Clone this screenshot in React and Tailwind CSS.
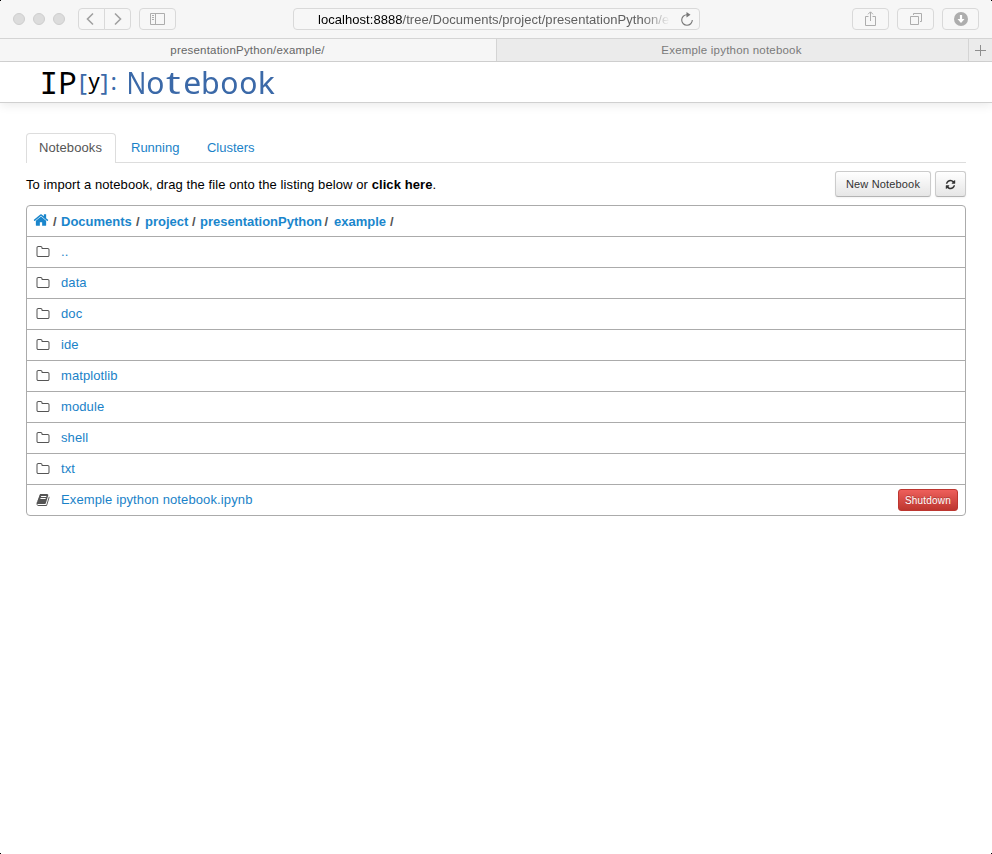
import React from "react";

const HOME =
  "M1472 992v480q0 26-19 45t-45 19h-384v-384h-256v384H384q-26 0-45-19t-19-45V992q0-1 .5-3t.5-3l575-474 575 474q1 2 1 6zm223-69l-62 74q-8 9-21 11h-3q-13 0-21-7L896 424l-692 577q-12 8-24 7-13-2-21-11l-62-74q-8-10-7-23.5t11-21.5l719-599q32-26 76-26t76 26l244 204V288q0-14 9-23t23-9h192q14 0 23 9t9 23v408l219 182q10 8 11 21.5t-7 23.5z";
const FOLDER =
  "M1600 1312V608q0-40-28-68t-68-28H800q-40 0-68-28t-28-68v-64q0-40-28-68t-68-28H288q-40 0-68 28t-28 68v960q0 40 28 68t68 28h1216q40 0 68-28t28-68zm128-704v704q0 92-66 158t-158 66H288q-92 0-158-66t-66-158V352q0-92 66-158t158-66h320q92 0 158 66t66 158v32h672q92 0 158 66t66 158z";
const REFRESH =
  "M1639 1056q0 5-1 7-64 268-268 434.5T892 1664q-146 0-282.5-55T366 1452l-129 129q-19 19-45 19t-45-19-19-45v-448q0-26 19-45t45-19h448q26 0 45 19t19 45-19 45l-137 137q71 66 161 102t187 36q134 0 250-65t186-179q11-17 53-117 8-23 30-23h192q13 0 22.5 9.5t9.5 22.5zm25-800v448q0 26-19 45t-45 19h-448q-26 0-45-19t-19-45 19-45l138-138Q1097 384 896 384q-134 0-250 65T460 628q-11 17-53 117-8 23-30 23H178q-13 0-22.5-9.5T146 736v-7q65-268 270-434.5T896 128q146 0 284 55.5T1425 340l130-129q19-19 45-19t45 19 19 45z";
const BOOK =
  "M1703 478q40 57 18 129l-275 906q-19 64-76.5 107.5T1247 1664H324q-77 0-148.5-53.5T76 1479q-24-67-2-127 0-4 3-27t4-37q1-8-3-21.5t-3-19.5q2-11 8-21t16.5-23.5T116 1179q23-38 45-91.5t30-91.5q3-10 .5-30t-.5-28q3-11 17-28t17-23q21-36 42-92t25-90q1-9-2.5-32t.5-28q4-13 22-30.5t22-22.5q19-26 42.5-84.5T404 411q1-8-3-25.5t-2-26.5q2-8 9-18t18-23 17-21q8-12 16.5-30.5t15-35 16-36 19.5-32 26.5-23.5 36-11.5T620 134l-1 3q38-9 51-9h761q74 0 114 56t18 130l-274 906q-36 119-71.5 153.5T1089 1408H220q-27 0-38 15-11 16-1 43 24 70 144 70h923q29 0 56-15.5t35-41.5l300-987q7-22 5-57 38 15 59 43zm-1064 2q-4 13 2 22.5t20 9.5h608q13 0 25.5-9.5T1311 480l21-64q4-13-2-22.5t-20-9.5H702q-13 0-25.5 9.5T660 416zm-83 256q-4 13 2 22.5t20 9.5h608q13 0 25.5-9.5T1228 736l21-64q4-13-2-22.5t-20-9.5H619q-13 0-25.5 9.5T577 672z";

function Glyph({ d, className }) {
  return (
    <svg viewBox="0 0 1792 1792" fill="currentColor" className={`shrink-0 ${className}`}>
      <path d={d} />
    </svg>
  );
}

function ToolButton({ className = "", children }) {
  return (
    <button className={`flex h-[22px] shrink-0 items-center justify-center rounded border border-[#d9d9d9] bg-[#f7f7f7] text-[#adadad] ${className}`}>
      {children}
    </button>
  );
}

function Toolbar() {
  return (
    <div className="flex h-[38px] items-center bg-[#f6f6f6]">
      <div className="ml-[13px] flex gap-2">
        {[0, 1, 2].map((i) => (
          <span key={i} className="size-3 rounded-full border border-[#cecece] bg-[#dcdcdc]" />
        ))}
      </div>
      <ToolButton className="ml-[13px] w-[27px] rounded-r-none pr-[3px]">
        <svg width="8" height="14" viewBox="0 0 8 14" fill="none" stroke="#a0a0a0" strokeWidth="1.6"><path d="M7 1.5 1.5 7 7 12.5" /></svg>
      </ToolButton>
      <ToolButton className="-ml-px w-[27px] rounded-l-none">
        <svg width="8" height="14" viewBox="0 0 8 14" fill="none" stroke="#a0a0a0" strokeWidth="1.6"><path d="M1 1.5 6.5 7 1 12.5" /></svg>
      </ToolButton>
      <ToolButton className="ml-2 w-[37px]">
        <svg width="15" height="12" viewBox="0 0 15 12" fill="none" stroke="#adadad"><path d="M.5 .5h14v11H.5zM5.5 1v10M2 2.5h2M2 4.5h2M2 6.5h2" /></svg>
      </ToolButton>
      <div className="ml-[117px] flex h-[22px] w-[407px] items-center rounded border border-[#d9d9d9] bg-[#f7f7f7] pl-6">
        <div className="w-[352px] pt-[2px] text-[13px] leading-[18px] tracking-[0.05px] whitespace-nowrap text-[#606060] [mask-image:linear-gradient(to_right,black_325px,transparent_352px)]">
          <span className="text-black">localhost:8888</span>/tree/Documents/project/presentationPython/e
        </div>
        <svg className="mb-px ml-[10px]" width="14" height="14" viewBox="0 0 14 14" fill="none" stroke="#777" strokeWidth="1.1">
          <path d="M7 2.7a5.3 5.3 0 1 0 5.3 5.3" />
          <path d="M6.5 0 10.5 2.7 6.5 5.4Z" fill="#777" stroke="none" />
        </svg>
      </div>
      <div className="ml-[152px] flex gap-2">
        <ToolButton className="w-[37px]">
          <svg className="mb-px" width="11" height="15" viewBox="0 0 11 15" fill="none" stroke="#adadad"><path d="M3.5 5.5h-3v9h10v-9h-3M5.5 10V1M3 3.3 5.5 .8 8 3.3" /></svg>
        </ToolButton>
        <ToolButton className="w-[37px]">
          <svg width="12" height="12" viewBox="0 0 12 12" fill="none" stroke="#adadad"><path d="M.5 3.5h8v8h-8zM3.5 2V.5h8v8H10" /></svg>
        </ToolButton>
        <ToolButton className="w-[37px]">
          <svg width="14" height="14" viewBox="0 0 14 14"><circle cx="7" cy="7" r="7" fill="#adadad" /><path d="M5.9 3h2.2v4h2.4L7 11 3.5 7h2.4z" fill="#fff" /></svg>
        </ToolButton>
      </div>
    </div>
  );
}

function TabStrip() {
  return (
    <div className="flex h-6 border-y border-[#d4d4d4] text-[11.5px] leading-[22px] tracking-[0.2px]">
      <div className="w-[496px] bg-[#f6f6f6] pr-px text-center text-[#666]">presentationPython/example/</div>
      <div className="w-[472px] border-l border-[#d4d4d4] bg-[#ebebeb] pr-[2px] text-center text-[#7a7a7a]">Exemple ipython notebook</div>
      <div className="flex w-6 items-center justify-center border-l border-[#d4d4d4] bg-[#ebebeb]">
        <svg width="11" height="11" viewBox="0 0 11 11" stroke="#8e8e8e"><path d="M5.5 0v11M0 5.5h11" /></svg>
      </div>
    </div>
  );
}

const WORDMARK = [
  ["N", "scale-x-[0.84]"],
  ["o", "scale-x-[0.97]"],
  ["t", "scale-x-[1.3]"],
  ["e", "scale-x-[1.03]"],
  ["b", "scale-x-[0.98]"],
  ["o", "scale-x-[0.97]"],
  ["o", "scale-x-[0.97]"],
  ["k", "scale-x-[1.03]"],
];

function Logo() {
  return (
    <div className="flex h-[41px] items-baseline border-b border-[#d0d0d0] pl-[39.5px] font-['Noto_Sans',sans-serif] text-[31px] leading-[41px] whitespace-pre text-[#3b69a8] shadow-[0_2px_10px_rgba(0,0,0,0.09)]">
      <span className="flex w-[18.5px] justify-center font-['DejaVu_Sans_Mono',monospace] text-[30px] text-black">I</span>
      <span className="flex w-[19px] justify-center text-black">P</span>
      <span className="w-[10.5px] -translate-y-[3.5px] pl-[2px] text-[24px]">[</span>
      <span className="w-[13px] -translate-y-[5px] pl-px text-[22px] text-black">y</span>
      <span className="w-[9px] -translate-y-[3.5px] text-[24px]">]</span>
      <span className="w-[17.5px] -translate-y-[4px] pl-px text-[24px]">:</span>
      <span className="flex">
        {WORDMARK.map(([letter, scale], i) => (
          <span key={i} className={`flex w-[18.6px] justify-center ${scale}`}>{letter}</span>
        ))}
      </span>
    </div>
  );
}

function Breadcrumb() {
  const crumbs = [
    ["Documents", "w-[75px]", "w-[9px]"],
    ["project", "w-[47px]", "w-[8px]"],
    ["presentationPython", "w-[124.5px]", "w-[9.5px]"],
    ["example", "w-[56px]", "w-[10px]"],
  ];
  return (
    <div className="flex h-[30px] items-center pt-px pl-[6px] font-bold text-[#555]">
      <Glyph d={HOME} className="mr-[4px] mb-[3px] size-4 text-[#1a86cc]" />
      <span className="w-2">/</span>
      {crumbs.map(([name, width, gap]) => (
        <React.Fragment key={name}>
          <a className={`${width} whitespace-nowrap text-[#1a86cc]`}>{name}</a>
          <span className={gap}>/</span>
        </React.Fragment>
      ))}
    </div>
  );
}

const FOLDERS = ["..", "data", "doc", "ide", "matplotlib", "module", "shell", "txt"];

export default function App() {
  return (
    <div className="relative h-[854px] w-[992px] overflow-hidden bg-white font-['Liberation_Sans',Arial,sans-serif] text-[13px] leading-5 text-black">
      <Toolbar />
      <TabStrip />
      <Logo />
      <main className="px-[26px] pt-[30px]">
        <div className="flex h-[30px] border-b border-[#ddd] text-[#1a82c8]">
          <div className="h-[30px] w-[90px] rounded-t border border-b-0 border-[#ddd] bg-white pl-3 leading-7 tracking-[0.1px] text-[#555]">Notebooks</div>
          <div className="pl-[15px] leading-[30px]">Running</div>
          <div className="pl-[27.5px] leading-[30px]">Clusters</div>
        </div>
        <div className="flex h-[42px] items-center">
          <p className="flex-1 pt-[2px] tracking-[0.085px]">To import a notebook, drag the file onto the listing below or <b>click here</b>.</p>
          <button className="h-[26px] w-[96px] rounded-[3px] border border-[#ccc] border-b-[#b3b3b3] bg-linear-to-b from-white to-[#e6e6e6] text-[11px] tracking-[0.17px] text-[#333] shadow-[0_1px_2px_rgba(0,0,0,0.05)]">New Notebook</button>
          <button className="ml-1 flex h-[26px] w-[31px] items-center justify-center rounded-[3px] border border-[#ccc] border-b-[#b3b3b3] bg-linear-to-b from-white to-[#e6e6e6] text-[#333] shadow-[0_1px_2px_rgba(0,0,0,0.05)]">
            <Glyph d={REFRESH} className="size-[11px]" />
          </button>
        </div>
        <div className="rounded border border-[#ababab]">
          <Breadcrumb />
          {FOLDERS.map((name) => (
            <div key={name} className="flex h-[31px] items-center border-t border-[#ababab] pl-[9.4px]">
              <Glyph d={FOLDER} className="mb-px size-[14px] text-[#555]" />
              <a className="ml-[10.6px] tracking-[0.1px] text-[#1a82c8]">{name}</a>
            </div>
          ))}
          <div className="flex h-[31px] items-center border-t border-[#ababab] pr-[7px] pl-[9.4px]">
            <Glyph d={BOOK} className="mb-px size-[14px] text-[#555]" />
            <a className="ml-[10.6px] flex-1 tracking-[0.12px] text-[#1a82c8]">Exemple ipython notebook.ipynb</a>
            <button className="h-[22px] w-[60px] rounded-[3px] border border-[#bd362f] bg-linear-to-b from-[#ee5f5b] to-[#bd362f] pt-px text-[10px] leading-[19px] tracking-[0.2px] text-white [text-shadow:0_-1px_0_rgba(0,0,0,0.25)]">Shutdown</button>
          </div>
        </div>
      </main>
      <span className="absolute top-0 left-0 size-px bg-black" />
      <span className="absolute top-0 right-0 size-px bg-black" />
      <span className="absolute bottom-0 left-0 size-px bg-black" />
      <span className="absolute right-0 bottom-0 size-px bg-black" />
    </div>
  );
}
